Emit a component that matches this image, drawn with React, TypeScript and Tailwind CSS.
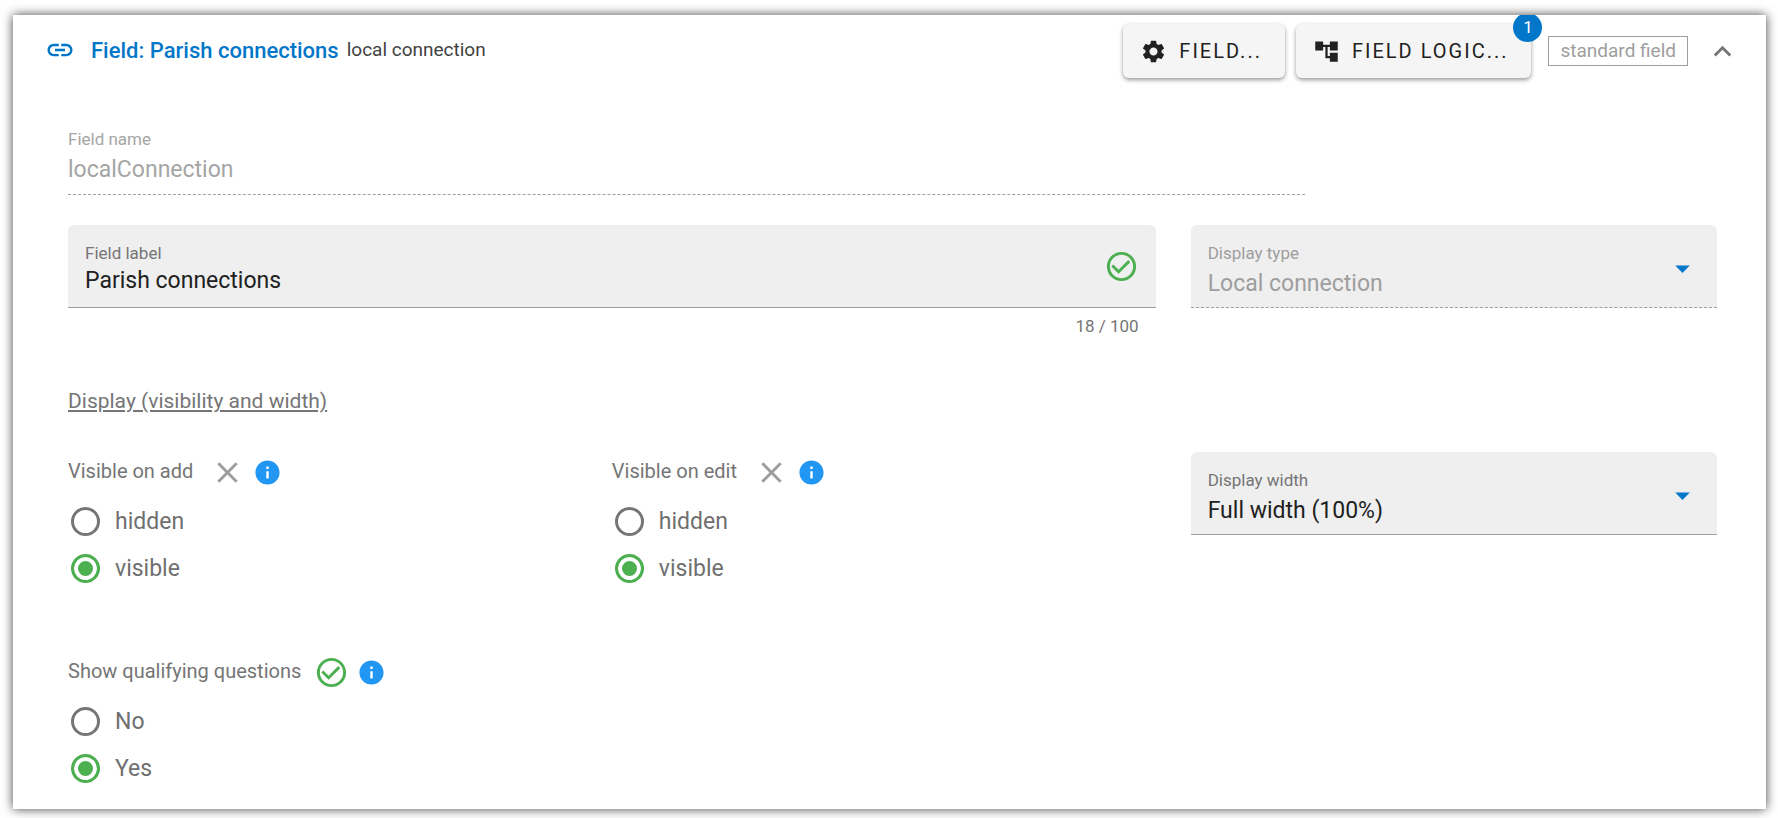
import React, { useState } from "react";
import {
  MdAccountTree,
  MdArrowDropDown,
  MdCheckCircleOutline,
  MdClose,
  MdExpandLess,
  MdInfo,
  MdLink,
  MdSettings,
} from "react-icons/md";

interface IRadioGroup {
  name: string;
  title: string;
  options: string[];
  value: string;
  setValue: (value: string) => void;
  icon: React.ReactNode;
}

function RadioGroup({
  name,
  title,
  options,
  value,
  setValue,
  icon,
}: IRadioGroup) {
  return (
    <fieldset>
      <legend className="flex h-9 items-center text-[20px] text-[#757575]">
        <span className="mr-[13px] pb-[2px]">{title}</span>
        {icon}
        <MdInfo className="ml-2 size-[29px] text-[#2196f3]" />
      </legend>
      <div className="flex flex-col pt-[8px]">
        {options.map((option) => (
          <label
            key={option}
            className="flex h-[47px] items-center gap-[15px] pl-[3px] text-[23px] text-[#6f6f6f]">
            <input
              type="radio"
              name={name}
              value={option}
              checked={value === option}
              onChange={() => setValue(option)}
              className="size-[29px] shrink-0 appearance-none rounded-full border-3 border-[#757575] bg-white checked:border-[#4caf50] checked:bg-[#4caf50] checked:shadow-[inset_0_0_0_4px_#fff]"
            />
            <span className="pt-[2px]">{option}</span>
          </label>
        ))}
      </div>
    </fieldset>
  );
}

export default function App() {
  const [label, setLabel] = useState<string>("Parish connections");
  const [width, setWidth] = useState<string>("Full width (100%)");
  const [onAdd, setOnAdd] = useState<string>("visible");
  const [onEdit, setOnEdit] = useState<string>("visible");
  const [questions, setQuestions] = useState<string>("Yes");

  return (
    <div className="bg-white py-[15px] pr-3 pl-[13px] font-[Roboto,sans-serif]">
      <div className="overflow-clip bg-white pb-[17px] shadow-[0_0_10px_rgba(0,0,0,0.75)]">
        <div className="flex items-start justify-between pt-[9px] pr-[26px] pl-8">
          <div className="flex h-[52px] items-center">
            <MdLink className="mr-4 size-[30px] text-[#0277c9]" />
            <h1 className="text-[22px] font-medium text-[#0277c9]">
              Field: Parish connections
            </h1>
            <span className="ml-2 text-[19px] text-[#424242]">
              local connection
            </span>
          </div>
          <div className="flex h-[54px] items-center">
            <button className="mr-[11px] flex h-[54px] items-center gap-3 rounded-md bg-[#f5f5f5] pr-[23px] pl-[17px] text-[20px] tracking-widest text-[#212121] shadow-[0_2px_4px_rgba(0,0,0,0.4)]">
              <MdSettings className="size-[27px]" />
              FIELD...
            </button>
            <button className="relative mr-[17px] flex h-[54px] items-center gap-3 rounded-md bg-[#f5f5f5] pr-[23px] pl-[17px] text-[20px] tracking-widest text-[#212121] shadow-[0_2px_4px_rgba(0,0,0,0.4)]">
              <MdAccountTree className="size-[27px]" />
              FIELD LOGIC...
              <span className="absolute -top-[11px] -right-[11px] flex size-[29px] items-center justify-center rounded-full bg-[#0277c9] text-[17px] tracking-normal text-white">
                1
              </span>
            </button>
            <span className="mr-[17px] flex h-[30px] items-center border border-[#9e9e9e] px-[11px] text-[19px] text-[#9e9e9e]">
              standard field
            </span>
            <button aria-label="Collapse">
              <MdExpandLess className="size-[35px] text-[#757575]" />
            </button>
          </div>
        </div>

        <div className="pt-[51px] pr-[49px] pl-[55px]">
          <div className="flex w-3/4 flex-col border-b border-dashed border-[#9e9e9e] pb-2">
            <label
              htmlFor="name"
              className="text-[17px] leading-5 text-[#a5a5a5]">
              Field name
            </label>
            <input
              id="name"
              disabled
              value="localConnection"
              className="mt-[5px] h-8 w-full text-[23px] text-[#a5a5a5]"
            />
          </div>

          <div className="mt-[30px] grid grid-cols-3 gap-x-[35px]">
            <div className="col-span-2">
              <div className="flex h-[83px] items-center rounded-t-md border-b border-[#9e9e9e] bg-[#efefef] px-[17px]">
                <div className="flex grow flex-col pt-2">
                  <label
                    htmlFor="label"
                    className="text-[17px] leading-5 text-[#757575]">
                    Field label
                  </label>
                  <input
                    id="label"
                    value={label}
                    maxLength={100}
                    onChange={(e) => setLabel(e.target.value)}
                    className="mt-[2px] h-8 w-full text-[23px] text-[#212121] outline-none"
                  />
                </div>
                <MdCheckCircleOutline className="size-[35px] shrink-0 text-[#4caf50]" />
              </div>
              <p className="pt-2 pr-[17px] text-right text-[17px] leading-5 text-[#757575]">
                {label.length} / 100
              </p>
            </div>
            <div className="relative flex h-[83px] flex-col rounded-t-md border-b border-dashed border-[#9e9e9e] bg-[#efefef] px-[17px] pt-[18px]">
              <label
                htmlFor="type"
                className="text-[17px] leading-5 text-[#9e9e9e]">
                Display type
              </label>
              <select
                id="type"
                disabled
                className="mt-1 h-8 w-full appearance-none text-[23px] text-[#9e9e9e] opacity-100">
                <option>Local connection</option>
              </select>
              <MdArrowDropDown className="pointer-events-none absolute top-[26px] right-[17px] size-[35px] text-[#0277c9]" />
            </div>
          </div>

          <h2 className="mt-[51px] text-[21px] leading-7 text-[#757575] underline">
            Display (visibility and width)
          </h2>

          <div className="mt-[37px] grid grid-cols-3 gap-x-[35px]">
            <div className="col-span-2 grid grid-cols-2 pt-[2px]">
              <RadioGroup
                name="add"
                title="Visible on add"
                options={["hidden", "visible"]}
                value={onAdd}
                setValue={setOnAdd}
                icon={<MdClose className="ml-1 size-[35px] text-[#9e9e9e]" />}
              />
              <RadioGroup
                name="edit"
                title="Visible on edit"
                options={["hidden", "visible"]}
                value={onEdit}
                setValue={setOnEdit}
                icon={<MdClose className="ml-1 size-[35px] text-[#9e9e9e]" />}
              />
            </div>
            <div className="relative flex h-[83px] flex-col rounded-t-md border-b border-[#9e9e9e] bg-[#efefef] px-[17px] pt-[18px]">
              <label
                htmlFor="width"
                className="text-[17px] leading-5 text-[#757575]">
                Display width
              </label>
              <select
                id="width"
                value={width}
                onChange={(e) => setWidth(e.target.value)}
                className="mt-1 h-8 w-full appearance-none text-[23px] text-[#212121] outline-none">
                <option>Full width (100%)</option>
                <option>Half width (50%)</option>
              </select>
              <MdArrowDropDown className="pointer-events-none absolute top-[26px] right-[17px] size-[35px] text-[#0277c9]" />
            </div>
          </div>

          <div className="mt-[62px]">
            <RadioGroup
              name="questions"
              title="Show qualifying questions"
              options={["No", "Yes"]}
              value={questions}
              setValue={setQuestions}
              icon={
                <MdCheckCircleOutline className="size-[35px] text-[#4caf50]" />
              }
            />
          </div>
        </div>
      </div>
    </div>
  );
}
